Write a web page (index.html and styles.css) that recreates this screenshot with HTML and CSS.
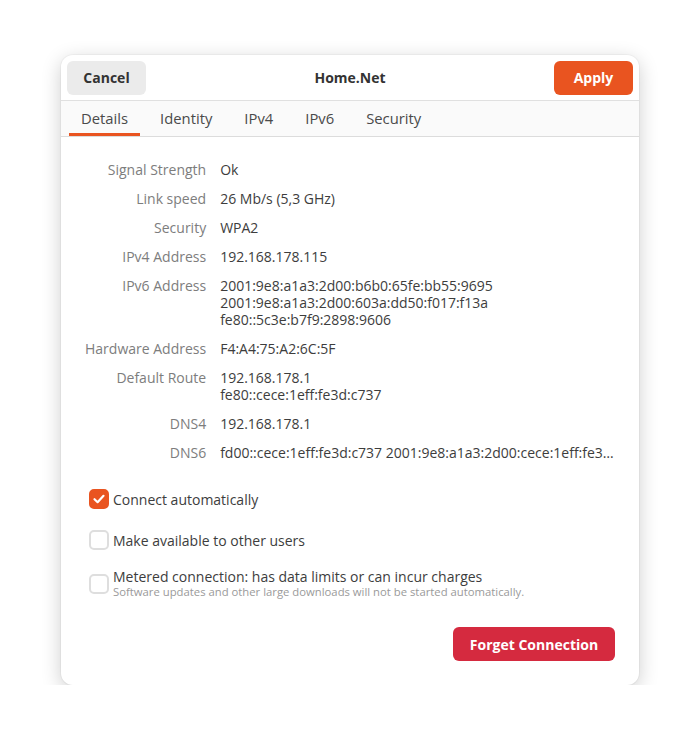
FILE: index.html
```html
<!DOCTYPE html>
<html lang="en">
<head>
  <meta charset="UTF-8" />
  <title>Home.Net</title>
  <link rel="stylesheet" href="styles.css">
</head>
<body>
  <div class="window">
    <div class="header">
      <button class="btn cancel">Cancel</button>
      <div class="title">Home.Net</div>
      <button class="btn apply">Apply</button>
    </div>

    <div class="tabs">
      <div class="tab active">Details</div>
      <div class="tab">Identity</div>
      <div class="tab">IPv4</div>
      <div class="tab">IPv6</div>
      <div class="tab">Security</div>
    </div>

    <div class="content">
      <div class="details">
        <div class="label">Signal Strength</div>
        <div class="value">Ok</div>
        <div class="label">Link speed</div>
        <div class="value">26 Mb/s (5,3 GHz)</div>
        <div class="label">Security</div>
        <div class="value">WPA2</div>
        <div class="label">IPv4 Address</div>
        <div class="value">192.168.178.115</div>
        <div class="label">IPv6 Address</div>
        <div class="value">2001:9e8:a1a3:2d00:b6b0:65fe:bb55:9695<br>2001:9e8:a1a3:2d00:603a:dd50:f017:f13a<br>fe80::5c3e:b7f9:2898:9606</div>
        <div class="label">Hardware Address</div>
        <div class="value">F4:A4:75:A2:6C:5F</div>
        <div class="label">Default Route</div>
        <div class="value">192.168.178.1<br>fe80::cece:1eff:fe3d:c737</div>
        <div class="label">DNS4</div>
        <div class="value">192.168.178.1</div>
        <div class="label">DNS6</div>
        <div class="value ellipsis">fd00::cece:1eff:fe3d:c737 2001:9e8:a1a3:2d00:cece:1eff:fe3d:c737</div>
      </div>

      <div class="options">
        <label class="option">
          <span class="check checked">
            <svg width="14" height="14" viewBox="0 0 14 14"><path d="M2.5 7.2 L5.6 10.2 L11.5 3.8" fill="none" stroke="#fff" stroke-width="2.2" stroke-linecap="round" stroke-linejoin="round"/></svg>
          </span>
          <span class="option-text">Connect automatically</span>
        </label>
        <label class="option">
          <span class="check"></span>
          <span class="option-text">Make available to other users</span>
        </label>
        <label class="option metered">
          <span class="check"></span>
          <span class="option-text">
            <span>Metered connection: has data limits or can incur charges</span>
            <span class="hint">Software updates and other large downloads will not be started automatically.</span>
          </span>
        </label>
      </div>

      <div class="footer">
        <button class="btn forget">Forget Connection</button>
      </div>
    </div>
  </div>
</body>
</html>
```

FILE: styles.css
```css
* {
  margin: 0;
  padding: 0;
  box-sizing: border-box;
}
body {
  font-family: 'Open Sans', 'Noto Sans', sans-serif;
  font-size: 14px;
  background: #fff;
  color: #3d3d3d;
  padding: 55px 0 0 61px;
}
.window {
  width: 578px;
  height: 630px;
  background: #fff;
  border-radius: 12px;
  box-shadow: 0 5px 20px rgba(0, 0, 0, 0.2), 0 0 0 1px rgba(0, 0, 0, 0.03);
  overflow: hidden;
  display: flex;
  flex-direction: column;
}
.header {
  height: 46px;
  padding: 6px;
  display: flex;
  align-items: center;
  justify-content: space-between;
  border-bottom: 1px solid #e0e0e0;
}
.title {
  font-weight: bold;
  color: #333;
}
.btn {
  font-family: inherit;
  font-size: 14px;
  font-weight: bold;
  height: 34px;
  border: none;
  border-radius: 6px;
  cursor: pointer;
}
.cancel {
  width: 79px;
  background: #ebebeb;
  color: #333;
}
.apply {
  width: 79px;
  background: #e95420;
  color: #fff;
}
.tabs {
  height: 36px;
  background: #fafafa;
  border-bottom: 1px solid #dcdcdc;
  display: flex;
  gap: 8px;
  padding-left: 8px;
}
.tab {
  padding: 0 12px;
  font-size: 14.8px;
  line-height: 35px;
  color: #4a4a4a;
  border-bottom: 3px solid transparent;
}
.tab.active {
  border-bottom-color: #e95420;
}
.content {
  flex: 1;
  padding: 24px;
  display: flex;
  flex-direction: column;
}
.details {
  display: grid;
  grid-template-columns: auto 1fr;
  column-gap: 13px;
  row-gap: 12px;
  line-height: 17px;
}
.label {
  text-align: right;
  color: #7d7d7d;
  padding-right: 1px;
}
.value {
  color: #3d3d3d;
  min-width: 0;
}
.ellipsis {
  white-space: nowrap;
  overflow: hidden;
  text-overflow: ellipsis;
}
.options {
  margin-top: 28px;
  padding-left: 4px;
  display: flex;
  flex-direction: column;
}
.option {
  display: flex;
  align-items: center;
  gap: 4px;
  line-height: 17px;
  margin-bottom: 21px;
}
.option.metered {
  margin-top: -3px;
  margin-bottom: 0;
}
.check {
  width: 20px;
  height: 20px;
  border: 2px solid #dedede;
  border-radius: 5px;
  background: #fff;
  flex-shrink: 0;
  display: flex;
  align-items: center;
  justify-content: center;
}
.check.checked {
  background: #e95420;
  border-color: #e95420;
}
.option-text {
  display: flex;
  flex-direction: column;
  color: #3d3d3d;
}
.hint {
  font-size: 11.3px;
  line-height: 14px;
  color: #9a9a9a;
}
.footer {
  margin-top: auto;
  display: flex;
  justify-content: flex-end;
}
.forget {
  width: 162px;
  background: #d52a3f;
  color: #fff;
}
```
